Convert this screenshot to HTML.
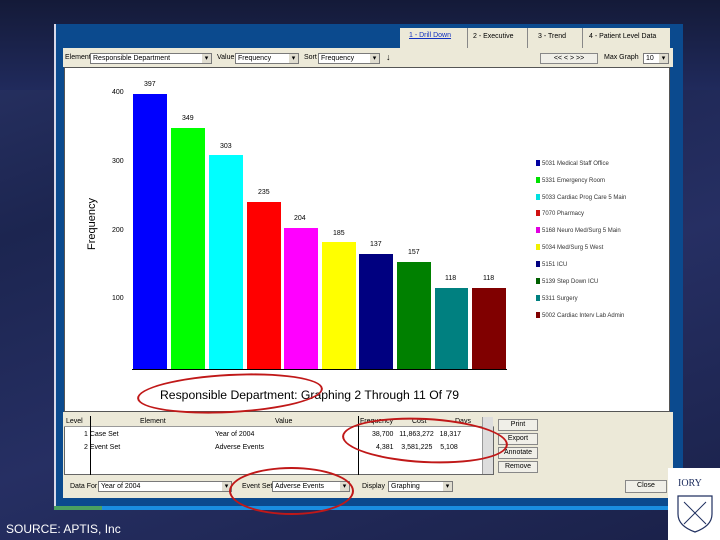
<!DOCTYPE html>
<html><head><style>
*{margin:0;padding:0;box-sizing:border-box}
body{width:720px;height:540px;overflow:hidden;position:relative;font-family:"Liberation Sans",sans-serif;background:linear-gradient(160deg,#2a3466 0%,#1c2550 30%,#262f63 60%,#1a2149 100%)}
.a{position:absolute}
.t{position:absolute;font-size:7px;color:#000;white-space:nowrap}
.cb{position:absolute;height:11px;background:#fff;border:1px solid #7a7a7a;font-size:7px;padding-left:2px;line-height:9px}
.cb::after{content:"▾";position:absolute;right:0;top:0;width:9px;height:9px;background:#e0ddd0;font-size:7px;text-align:center}
.btn{position:absolute;background:#f0efe8;border:1px solid #888;font-size:7px;text-align:center;line-height:10px}
.lg{position:absolute;left:536px;font-size:6px;color:#333}
.lg i{display:inline-block;width:4px;height:6px;margin-right:2px;vertical-align:-1px}
.oval{position:absolute;border:2.5px solid #c01818;border-radius:50%}
</style></head><body>
<div class="a" style="left:0;top:0;width:720px;height:90px;background:linear-gradient(180deg,#141a38,#202a5c)"></div>
<div class="a" style="left:54px;top:24px;width:629px;height:482px;background:#0b4a8e;border-left:2px solid #d8d8e8"></div>
<div class="a" style="left:400px;top:28px;width:270px;height:20px;background:#ece9d8"></div>
<div class="t" style="left:409px;top:32px;color:#1030c0;text-decoration:underline">1 - Drill Down</div>
<div class="a" style="left:467px;top:28px;width:1px;height:20px;background:#888"></div>
<div class="t" style="left:473px;top:33px">2 - Executive</div>
<div class="a" style="left:527px;top:28px;width:1px;height:20px;background:#888"></div>
<div class="t" style="left:538px;top:33px">3 - Trend</div>
<div class="a" style="left:582px;top:28px;width:1px;height:20px;background:#888"></div>
<div class="t" style="left:589px;top:33px">4 - Patient Level Data</div>
<div class="a" style="left:63px;top:48px;width:610px;height:19px;background:#ece9d8"></div>
<div class="t" style="left:65px;top:54px">Element</div>
<div class="cb" style="left:90px;top:53px;width:122px">Responsible Department</div>
<div class="t" style="left:217px;top:54px">Value</div>
<div class="cb" style="left:235px;top:53px;width:64px">Frequency</div>
<div class="t" style="left:304px;top:54px">Sort</div>
<div class="cb" style="left:318px;top:53px;width:62px">Frequency</div>
<div class="t" style="left:386px;top:52px;font-size:9px">↓</div>
<div class="btn" style="left:540px;top:53px;width:58px;height:11px">&lt;&lt; &lt; &gt; &gt;&gt;</div>
<div class="t" style="left:604px;top:54px">Max Graph</div>
<div class="cb" style="left:643px;top:53px;width:26px">10</div>
<div class="a" style="left:64px;top:67px;width:606px;height:345px;background:#fff;border:1px solid #555"></div>
<div class="t" style="font-size:11px;transform:rotate(-90deg);transform-origin:left top;top:250px;left:86px">Frequency</div>
<div class="t" style="left:112px;top:89px">400</div>
<div class="t" style="left:112px;top:158px">300</div>
<div class="t" style="left:112px;top:227px">200</div>
<div class="t" style="left:112px;top:295px">100</div>
<div class="a" style="left:132px;top:369px;width:375px;height:1px;background:#000"></div>
<div class="a" style="left:133px;top:94px;width:34px;height:275px;background:#0000ff"></div>
<div class="a" style="left:171px;top:128px;width:34px;height:241px;background:#00ff00"></div>
<div class="a" style="left:209px;top:155px;width:34px;height:214px;background:#00ffff"></div>
<div class="a" style="left:247px;top:202px;width:34px;height:167px;background:#ff0000"></div>
<div class="a" style="left:284px;top:228px;width:34px;height:141px;background:#ff00ff"></div>
<div class="a" style="left:322px;top:242px;width:34px;height:127px;background:#ffff00"></div>
<div class="a" style="left:359px;top:254px;width:34px;height:115px;background:#000080"></div>
<div class="a" style="left:397px;top:262px;width:34px;height:107px;background:#008000"></div>
<div class="a" style="left:435px;top:288px;width:33px;height:81px;background:#008080"></div>
<div class="a" style="left:472px;top:288px;width:34px;height:81px;background:#800000"></div>
<div class="t" style="left:144px;top:81px">397</div>
<div class="t" style="left:182px;top:115px">349</div>
<div class="t" style="left:220px;top:143px">303</div>
<div class="t" style="left:258px;top:189px">235</div>
<div class="t" style="left:294px;top:215px">204</div>
<div class="t" style="left:333px;top:230px">185</div>
<div class="t" style="left:370px;top:241px">137</div>
<div class="t" style="left:408px;top:249px">157</div>
<div class="t" style="left:445px;top:275px">118</div>
<div class="t" style="left:483px;top:275px">118</div>
<div class="lg" style="top:160px"><i style="background:#0000a0"></i>5031 Medical Staff Office</div>
<div class="lg" style="top:177px"><i style="background:#00e000"></i>5331 Emergency Room</div>
<div class="lg" style="top:194px"><i style="background:#00e0e0"></i>5033 Cardiac Prog Care 5 Main</div>
<div class="lg" style="top:210px"><i style="background:#d01010"></i>7070 Pharmacy</div>
<div class="lg" style="top:227px"><i style="background:#e000e0"></i>5168 Neuro Med/Surg 5 Main</div>
<div class="lg" style="top:244px"><i style="background:#f0f000"></i>5034 Med/Surg 5 West</div>
<div class="lg" style="top:261px"><i style="background:#000080"></i>5151 ICU</div>
<div class="lg" style="top:278px"><i style="background:#006000"></i>5139 Step Down ICU</div>
<div class="lg" style="top:295px"><i style="background:#008080"></i>5311 Surgery</div>
<div class="lg" style="top:312px"><i style="background:#800000"></i>5002 Cardiac Interv Lab Admin</div>
<div class="t" style="left:160px;top:388px;font-size:12.2px">Responsible Department: Graphing 2 Through 11 Of 79</div>
<div class="a" style="left:63px;top:412px;width:610px;height:86px;background:#ece9d8"></div>
<div class="a" style="left:64px;top:416px;width:430px;height:59px;background:#fff;border:1px solid #666"></div>
<div class="a" style="left:64px;top:416px;width:430px;height:11px;background:#ece9d8;border-bottom:1px solid #999"></div>
<div class="a" style="left:90px;top:416px;width:1px;height:59px;background:#000"></div>
<div class="a" style="left:358px;top:416px;width:1px;height:59px;background:#000"></div>
<div class="t" style="left:66px;top:418px">Level</div>
<div class="t" style="left:140px;top:418px">Element</div>
<div class="t" style="left:275px;top:418px">Value</div>
<div class="t" style="left:360px;top:418px">Frequency</div>
<div class="t" style="left:412px;top:418px">Cost</div>
<div class="t" style="left:455px;top:418px">Days</div>
<div class="t" style="left:84px;top:431px">1 Case Set</div>
<div class="t" style="left:215px;top:431px">Year of 2004</div>
<div class="t" style="left:372px;top:431px">38,700 &nbsp; 11,863,272 &nbsp; 18,317</div>
<div class="t" style="left:84px;top:444px">2 Event Set</div>
<div class="t" style="left:215px;top:444px">Adverse Events</div>
<div class="t" style="left:376px;top:444px">4,381 &nbsp; &nbsp;3,581,225 &nbsp; &nbsp;5,108</div>
<div class="a" style="left:482px;top:417px;width:11px;height:57px;background:#ddd;border-left:1px solid #999"></div>
<div class="btn" style="left:498px;top:419px;width:40px;height:12px">Print</div>
<div class="btn" style="left:498px;top:433px;width:40px;height:12px">Export</div>
<div class="btn" style="left:498px;top:447px;width:40px;height:12px">Annotate</div>
<div class="btn" style="left:498px;top:461px;width:40px;height:12px">Remove</div>
<div class="t" style="left:70px;top:483px">Data For</div>
<div class="cb" style="left:98px;top:481px;width:134px">Year of 2004</div>
<div class="t" style="left:242px;top:483px">Event Set</div>
<div class="cb" style="left:272px;top:481px;width:78px">Adverse Events</div>
<div class="t" style="left:362px;top:483px">Display</div>
<div class="cb" style="left:388px;top:481px;width:65px">Graphing</div>
<div class="btn" style="left:625px;top:480px;width:42px;height:13px">Close</div>
<div class="a" style="left:54px;top:506px;width:616px;height:4px;background:#1a8ee0"></div>
<div class="a" style="left:54px;top:506px;width:48px;height:4px;background:#4aa060"></div>
<div class="oval" style="left:137px;top:374px;width:186px;height:39px;transform:rotate(-3deg)"></div>
<div class="oval" style="left:342px;top:418px;width:166px;height:45px;transform:rotate(3deg)"></div>
<div class="oval" style="left:229px;top:467px;width:125px;height:48px"></div>
<div class="a" style="left:668px;top:468px;width:52px;height:72px;background:#fff"></div>
<div class="t" style="left:678px;top:478px;font-family:'Liberation Serif',serif;font-size:10px;color:#203060">IORY</div>
<svg class="a" style="left:676px;top:494px" width="40" height="40"><path d="M2 2 H36 V20 Q36 32 19 38 Q2 32 2 20 Z" fill="none" stroke="#203060" stroke-width="1.2"/><path d="M8 8 L30 30 M30 8 L8 30" stroke="#203060"/></svg>
<div class="t" style="left:6px;top:522px;font-size:12px;color:#fff">SOURCE: APTIS, Inc</div>
</body></html>
